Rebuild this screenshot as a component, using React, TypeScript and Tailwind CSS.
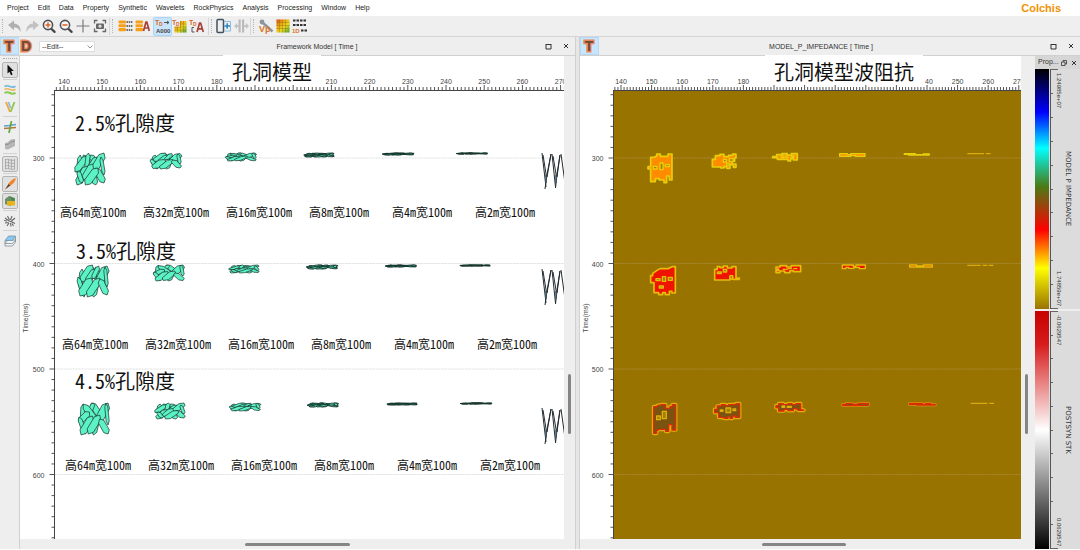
import React from 'react';

const menus = ['Project', 'Edit', 'Data', 'Property', 'Synthetic', 'Wavelets', 'RockPhysics', 'Analysis', 'Processing', 'Window', 'Help'];

const SANS = "font-['Liberation_Sans',sans-serif]";
const HEI = "font-['Noto_Sans_CJK_SC',sans-serif] [font-feature-settings:'hwid']";

/* ---------- toolbar ---------- */

function ToolButton({ label, active, children }: { label: string; active?: boolean; children: React.ReactNode }) {
  return (
    <button
      aria-label={label}
      className={`flex h-[17px] w-[17px] shrink-0 items-center justify-center rounded-[1px] ${active ? 'bg-[#c9e5fc] outline outline-[#a9d5f8]' : ''}`}
    >
      <svg width="16" height="16" viewBox="0 0 16 16" fill="none" className={SANS}>
        {children}
      </svg>
    </button>
  );
}

function ToolGroup({ children }: { children: React.ReactNode }) {
  return (
    <div className="flex items-center border-r border-[#d6d6d6] pr-px">
      <div className="mr-[3px] ml-[2px] h-[14px] border-l border-dotted border-[#b5b5b5]" />
      {children}
    </div>
  );
}

function Magnifier({ plus }: { plus?: boolean }) {
  return (
    <>
      <path d="M10 10.500l3.600 3.400" stroke="#444" strokeWidth="2.200" strokeLinecap="round" />
      <circle cx="7" cy="7" r="4.600" fill="#f5f5f5" stroke="#505458" strokeWidth="1.600" />
      <path d={plus ? 'M4.500 7h5M7 4.500v5' : 'M4.500 7h5'} stroke="#e0642c" strokeWidth="1.600" />
    </>
  );
}

function Stack() {
  return (
    <g fill="#f6a01a">
      <rect x="1.500" y="2.500" width="7.500" height="3" rx="1" />
      <rect x="1.500" y="6.200" width="7.500" height="3" rx="1" />
      <rect x="1.500" y="9.900" width="7.500" height="3.400" rx="1" />
    </g>
  );
}

function TimeDepth() {
  return (
    <g fontWeight="bold" fill="#d8662a">
      <text x="0" y="7" fontSize="7">T</text>
      <text x="4" y="8" fontSize="5">D</text>
    </g>
  );
}

function HeatSquare({ x, y, w, h }: { x: number; y: number; w: number; h: number }) {
  return (
    <>
      <defs>
        <linearGradient id="heat" x1="0" y1="0" x2="1" y2="1">
          <stop offset="0" stopColor="#e03c10" />
          <stop offset=".3" stopColor="#f0a010" />
          <stop offset=".6" stopColor="#e8d820" />
          <stop offset="1" stopColor="#48a030" />
        </linearGradient>
      </defs>
      <rect x={x} y={y} width={w} height={h} fill="url(#heat)" />
      <path d={`M${x + 3} ${y}v${h}M${x + 6} ${y}v${h}M${x + 9} ${y}v${h}M${x} ${y + 3}h${w}M${x} ${y + 6}h${w}M${x} ${y + 9}h${w}`} stroke="#8a6a10" strokeWidth=".4" />
    </>
  );
}

function Toolbar() {
  return (
    <div className="flex h-[21px] shrink-0 items-center border-b border-[#d4d4d4] bg-[#efefef]">
      <ToolGroup>
        <ToolButton label="Undo">
          <path d="M1 7l6-4.500v3c5 .5 7 4 6.500 8.500C12 11 10.500 9.500 7 9.300v3z" fill="#b0b0b0" />
        </ToolButton>
        <ToolButton label="Redo">
          <path d="M15 7L9 2.500v3C4 6 2 9.500 2.500 14 4 11 5.500 9.500 9 9.300v3z" fill="#c2c2c2" />
        </ToolButton>
        <ToolButton label="Zoom in"><Magnifier plus /></ToolButton>
        <ToolButton label="Zoom out"><Magnifier /></ToolButton>
        <ToolButton label="Pan"><path d="M8 1.500v13M1.500 8h13" stroke="#7a7a7a" strokeWidth="1.200" /></ToolButton>
        <ToolButton label="Capture">
          <path d="M2.500 5.500v-3h3M10.500 2.500h3v3M13.500 10.500v3h-3M5.500 13.500h-3v-3" stroke="#666" strokeWidth="1.300" />
          <rect x="4" y="5.500" width="8" height="5.500" rx="1" fill="#666" />
          <circle cx="8" cy="8.200" r="1.600" fill="#ddd" />
        </ToolButton>
      </ToolGroup>
      <ToolGroup>
        <ToolButton label="Layers">
          <Stack />
          <path d="M9.500 4h6M9.500 8h6M9.500 12h6" stroke="#444" strokeWidth="1.500" strokeDasharray="1.500 .7" />
        </ToolButton>
        <ToolButton label="Layer attributes">
          <Stack />
          <path d="M9.500 13l2.500-9h.8l2.500 9M10.500 10h4" stroke="#a84038" strokeWidth="1.700" />
        </ToolButton>
        <div className="w-[4px]" />
        <ToolButton label="Time depth" active>
          <TimeDepth />
          <path d="M9 4.500h5M12 3l2 1.500L12 6" stroke="#555" strokeWidth="1" />
          <text x="1" y="14.500" fontSize="6" fontWeight="bold" fill="#444">A000</text>
        </ToolButton>
        <ToolButton label="Time depth section">
          <HeatSquare x={2.500} y={3} w={12} h={11.500} />
          <rect x="0" y="1" width="8" height="7.500" fill="#efefef" />
          <TimeDepth />
        </ToolButton>
        <ToolButton label="Time depth attributes">
          <TimeDepth />
          <path d="M5 9.500H3V14h2.500" stroke="#555" strokeWidth="1" />
          <path d="M8 14l2.600-9h1l2.700 9M9 10.800h4" stroke="#a84038" strokeWidth="1.700" />
        </ToolButton>
        <div className="w-[2px]" />
      </ToolGroup>
      <ToolGroup>
        <ToolButton label="Add panel">
          <rect x="1" y="1.500" width="6.500" height="13" rx="1" stroke="#45525c" strokeWidth="1.500" />
          <path d="M8 3.500h6.500v9.500H8" stroke="#8abce0" strokeWidth="1" />
          <path d="M8.500 8h5.500M11.200 5.200v5.600" stroke="#2486cc" strokeWidth="1.500" />
        </ToolButton>
        <ToolButton label="Split panel">
          <rect x="5.500" y="1.500" width="2.200" height="13" fill="#bbb" />
          <rect x="9" y="1.500" width="2.200" height="13" fill="#bbb" />
          <path d="M1 8l3-3v2h2v2H4v2zM16 8l-3-3v2h-2v2h2v2z" fill="#c3c3c3" />
        </ToolButton>
      </ToolGroup>
      <div className="mr-[3px] ml-[2px] h-[14px] border-l border-dotted border-[#b5b5b5]" />
      <ToolButton label="Velocity tool">
        <path d="M3 3.500l5 4 6.500 6" stroke="#8c959c" strokeWidth="2.400" />
        <circle cx="4" cy="4" r="2.400" fill="#8c959c" />
        <text x="1" y="14" fontSize="9" fontWeight="bold" fill="#d8762a">Vp</text>
      </ToolButton>
      <ToolButton label="Section"><HeatSquare x={1.500} y={1.500} w={13} h={13} /></ToolButton>
      <ToolButton label="1D model">
        <path d="M1 2.500h14M1 7h14M9 12.500h6" stroke="#333" strokeWidth="1.800" strokeDasharray="2.500 1" />
        <text x="0" y="14.500" fontSize="6" fontWeight="bold" fill="#d8762a">1D</text>
      </ToolButton>
    </div>
  );
}

/* ---------- side strip ---------- */

function SideButton({ label, boxed, children }: { label: string; boxed?: boolean; children: React.ReactNode }) {
  return (
    <button
      aria-label={label}
      className={`flex h-[14px] w-[14px] items-center justify-center rounded-[1px] ${boxed ? 'bg-[#e0e0e0] outline outline-[#b4b4b4]' : ''}`}
    >
      <svg width="12" height="12" viewBox="0 0 12 12" fill="none">{children}</svg>
    </button>
  );
}

const sideGroup = 'mt-[2px] flex flex-col gap-[3px] border-t border-[#d2d2d2] pt-[3px]';

function SideStrip() {
  return (
    <div className="flex w-[20px] shrink-0 flex-col items-center border-r border-[#d0d0d0] bg-[#eee]">
      <div className="mt-[2px] mb-[4px] w-[14px] border-t border-dotted border-[#aaa]" />
      <SideButton label="Select" boxed>
        <path d="M3.500.5v9l2-1.800 1.500 3.500 1.600-.7L7.200 7h2.600z" fill="#111" />
      </SideButton>
      <div className={sideGroup}>
        <SideButton label="Horizons">
          <path d="M.5 2.500q2.500-1.500 5.500 0t5.500-.2" stroke="#6fb6e0" strokeWidth="1.700" />
          <path d="M.5 5.500q2.500-1.500 5.500 0t5.500-.2" stroke="#f0b860" strokeWidth="1.700" />
          <path d="M.5 9q2.500-1.500 5.500 0t5.500-.2" stroke="#86cc50" strokeWidth="2" />
        </SideButton>
        <SideButton label="Faults">
          <path d="M2 1l4 10" stroke="#f0a848" strokeWidth="2" />
          <path d="M4.500 1l2 6" stroke="#80b8e0" strokeWidth="1.500" />
          <path d="M10.500 1L6.500 11" stroke="#94c850" strokeWidth="2" />
        </SideButton>
      </div>
      <div className={sideGroup}>
        <SideButton label="Intersection">
          <path d="M0 5l5-.5 7-1" stroke="#5ba0d0" strokeWidth="1.500" />
          <path d="M0 7.500l12-1" stroke="#b07840" strokeWidth="1.700" />
          <path d="M7.500 0L5 12" stroke="#66a838" strokeWidth="1.700" />
        </SideButton>
        <SideButton label="Body">
          <path d="M1 5q3 0 4-2t6-2v7q-3 1-5 2.500T1 11z" fill="#b6b6b6" />
          <path d="M1 6.500q4 0 5-1.500t5-2" stroke="#8e8e8e" />
        </SideButton>
      </div>
      <div className={sideGroup}>
        <SideButton label="Grid" boxed>
          <path d="M1 2q2.500-1 5 0t5 0M1 5q2.500-1 5 0t5 0M1 8q2.500-1 5 0t5 0M1 11q2.500-1 5 0t5 0M1.500 1v10M4.500 1v10M7.500 1v10M10.500 1v10" stroke="#a2a2a2" strokeWidth=".8" />
        </SideButton>
      </div>
      <div className={sideGroup}>
        <SideButton label="Brush" boxed>
          <path d="M11.500.5Q8 1 4.500 6l1.800 1.600Q11 4.500 11.500.5z" fill="#ef8428" stroke="#ef8428" strokeWidth=".6" />
          <path d="M4.500 6L1 11.500 6.300 7.600z" fill="#5a3a24" />
        </SideButton>
        <SideButton label="Fill" boxed>
          <path d="M1 4l4-3 6 2v5l-5 3-5-2z" fill="#6c8f6a" />
          <path d="M3 6h8v4.500H3z" fill="#e8b41c" />
          <path d="M6 1l5 4-3 1z" fill="#3c8c3c" />
        </SideButton>
      </div>
      <div className={sideGroup}>
        <SideButton label="Scatter">
          <path d="M1 3l4 3M3.500 1l2 4M8 1L6.500 5M11 3L7.500 6M1 8l3.500-.5M11 8.500L8 7M3 11l2-3M7 11.500L6.500 8M9.500 11L8 8.500M0 5.500l3 .5M5 6l3 1" stroke="#666" strokeWidth="1.100" />
        </SideButton>
      </div>
      <div className={sideGroup}>
        <SideButton label="Slices">
          <path d="M1 8.500L4 5h7.500v2L8.500 11H1z" fill="#f4f4f4" stroke="#7c8a94" strokeWidth=".8" />
          <path d="M1 5.500L4.500 1H11.500L8.500 5.500z" fill="#8cc8ec" stroke="#6898b8" strokeWidth=".8" />
          <path d="M1 5.500v3h7.500l3-3.500V1.500" stroke="#7c8a94" strokeWidth=".8" />
        </SideButton>
      </div>
    </div>
  );
}

/* ---------- pane header ---------- */

function LetterButton({ letter, active }: { letter: string; active?: boolean }) {
  return (
    <button
      aria-label={letter === 'T' ? 'Time domain' : 'Depth domain'}
      className={`flex h-[16px] w-[17px] items-center justify-center ${active ? 'bg-[#c9e5fc] outline outline-[#b4daf8]' : ''}`}
    >
      <svg width="17" height="16" className={SANS}>
        <text x="8" y="13" textAnchor="middle" fontSize="14" fontWeight="bold" fill="#6e4838" stroke="#e8875a" strokeWidth="3" paintOrder="stroke">{letter}</text>
      </svg>
    </button>
  );
}

function PaneHeader({ title, children }: { title: string; children: React.ReactNode }) {
  return (
    <header className="flex h-[19px] shrink-0 items-center border-b border-[#d0d0d0] bg-[#eee] pl-px">
      {children}
      <h2 className="flex-1 text-center text-[7px] leading-none text-[#333]">{title}</h2>
      <button aria-label="Maximize" className="flex h-[12px] w-[18px] items-center justify-center">
        <svg width="7" height="7" fill="none"><path d="M1 1.500h5M1 1v5h5V1" stroke="#333" /></svg>
      </button>
      <button aria-label="Close" className="flex h-[12px] w-[18px] items-center justify-center">
        <svg width="6" height="6" fill="none"><path d="M1 1l4 4M5 1L1 5" stroke="#333" /></svg>
      </button>
    </header>
  );
}

/* ---------- axes ---------- */

type AxisProps = { x0: number; origin: number; step: number; grid: string; labels: number[] };

const traces = Array.from({ length: 134 }, (_, i) => 138 + i);
const times = Array.from({ length: 43 }, (_, i) => 240 + i * 10);

// x0: axis position, origin: x of trace 140, step: pixels per trace
function Axes({ x0, origin, step, grid, labels }: AxisProps) {
  const tx = (v: number) => origin + (v - 140) * step;
  const ty = (v: number) => 102 + (v - 300) * 1.055;
  return (
    <g className="text-[7px]" fill="#444">
      {times.filter(v => v % 100 === 0).map(v => (
        <g key={v}>
          <line x1={x0} x2="100%" y1={ty(v)} y2={ty(v)} stroke={grid} strokeWidth=".8" strokeDasharray="2 1" />
          <text x={x0 - 10} y={ty(v) + 3} textAnchor="end">{v}</text>
        </g>
      ))}
      {times.map(v => (
        <line key={v} x1={x0 - (v % 100 ? 3 : 5)} x2={x0} y1={ty(v)} y2={ty(v)} stroke="#555" />
      ))}
      {traces.map(v => (
        <line key={v} x1={tx(v)} x2={tx(v)} y1={v % 10 ? 31 : 29} y2={34} stroke="#555" />
      ))}
      {labels.map(v => (
        <text key={v} x={tx(v)} y="28" textAnchor="middle">{v}</text>
      ))}
      <line x1={x0} x2={x0} y1="34" y2="100%" stroke="#444" />
      <line x1={x0} x2="100%" y1="34.5" y2="34.5" stroke="#444" />
      <text transform="translate(8 262) rotate(-90)" textAnchor="middle">Time(ms)</text>
    </g>
  );
}

/* ---------- framework model ---------- */

// fractures inside a 28x32 body: x1, y1, x2, y2, thickness
const bodies = [
  [
    [3, 22, 5, 2, 4], [8, 2, 16, 16, 5], [15, 2, 21, 12, 5], [0, 19, 12, 3, 6], [11, 17, 13, 0, 4], [13, 17, 21, 4, 5],
    [17, 19, 28, 0, 7], [2, 32, 12, 13, 7], [8, 27, 17, 11, 6], [3, 18, 7, 30, 4], [20, 15, 28, 30, 6], [17, 19, 20, 32, 5],
    [10, 32, 22, 15, 7], [25, 4, 28, 22, 3],
  ],
  [
    [2, 24, 4, 4, 4], [11, 1, 18, 14, 5], [17, 2, 21, 14, 4], [3, 17, 14, 0, 7], [8, 18, 17, 4, 6], [14, 14, 20, 1, 4],
    [19, 20, 28, 1, 8], [0, 12, 6, 32, 4], [2, 31, 13, 13, 8], [15, 32, 18, 16, 5], [9, 32, 21, 13, 7], [21, 14, 28, 30, 6],
    [26, 2, 28, 22, 3],
  ],
  [
    [3, 20, 4, 1, 4], [12, 0, 21, 14, 6], [10, 10, 14, 0, 4], [4, 1, 18, 20, 6], [17, 21, 28, 0, 8], [0, 19, 10, 9, 6],
    [0, 14, 6, 31, 4], [2, 32, 13, 13, 7], [14, 32, 18, 14, 5], [9, 31, 20, 12, 7], [20, 16, 28, 31, 6], [26, 0, 28, 22, 3],
  ],
];

function FractureBody({ x, y, w, h, kind }: { x: number; y: number; w: number; h: number; kind: number }) {
  const sx = w / 28;
  const sy = h / 32;
  const pt = (px: number, py: number) => `${(px * sx).toFixed(1)} ${(py * sy).toFixed(1)}`;
  return (
    <g transform={`translate(${x} ${y})`} fill="#5cf2c6" stroke="#14322a" strokeWidth={h < 6 ? 0.9 : 0.7} strokeLinejoin="round">
      {bodies[kind].map(([x1, y1, x2, y2, t], i) => {
        const len = Math.hypot(x2 - x1, y2 - y1);
        const nx = (-(y2 - y1) / len) * t * 0.5;
        const ny = ((x2 - x1) / len) * t * 0.5;
        const ax = x1 + (x2 - x1) * 0.18;
        const ay = y1 + (y2 - y1) * 0.18;
        const bx = x1 + (x2 - x1) * 0.82;
        const by = y1 + (y2 - y1) * 0.82;
        return (
          <path
            key={i}
            d={`M${pt(x1, y1)}L${pt(ax + nx, ay + ny)}L${pt(bx + nx, by + ny)}L${pt(x2, y2)}L${pt(bx - nx, by - ny)}L${pt(ax - nx, ay - ny)}Z`}
          />
        );
      })}
    </g>
  );
}

const heights = [32, 16, 8, 4, 2, 1];
const names = ['64', '32', '16', '8', '4', '2'];

const modelRows = [
  { title: '2.5%孔隙度', tx: 55, ty: 75, bodyX: 55, bodyY: 97, labelX: 40, labelY: 161, endY: 97 },
  { title: '3.5%孔隙度', tx: 56, ty: 203, bodyX: 58, bodyY: 209, labelX: 42, labelY: 293, endY: 213 },
  { title: '4.5%孔隙度', tx: 55, ty: 333, bodyX: 59, bodyY: 347, labelX: 45, labelY: 414, endY: 352 },
];

const bodyOffsets = [0, 76, 151, 229, 308, 382];

function FrameworkPlot() {
  return (
    <svg className={`h-full w-full overflow-hidden ${SANS}`}>
      <Axes x0={34.5} origin={44} step={3.82} grid="#d4d4d4" labels={[140, 150, 160, 170, 180, 210, 220, 230, 240, 250, 260, 270]} />
      {modelRows.map((row, r) => (
        <g key={row.title}>
          <text x={row.tx} y={row.ty} className={`text-[20px] ${HEI}`} fill="#111">{row.title}</text>
          {names.map((n, i) => (
            <g key={n}>
              <FractureBody x={row.bodyX + bodyOffsets[i]} y={row.bodyY} w={29} h={heights[i]} kind={(r + i) % 3} />
              <text x={row.labelX + i * 83} y={row.labelY} className={`text-[12px] ${HEI}`} fill="#111">{`高${n}m宽100m`}</text>
            </g>
          ))}
          <g transform={`translate(521 ${row.endY})`} fill="none">
            <path d="M1 0L5 34M2 2L5.500 24L10 1M4 36L6 22M14.500 35L16 22M11 1L14.500 34M12 3L15.500 24L19 2M20 1L24 30M10 1L6 24M19 2L16 24" stroke="#222b30" strokeWidth="1" />
            <path d="M5 22V30M15 22V30" stroke="#3c5666" strokeWidth="1.500" />
          </g>
        </g>
      ))}
    </svg>
  );
}

/* ---------- impedance model ---------- */

type Blob = { d: string; holes?: string };

// outlines are digitised at three units per pixel
const orange: Blob[] = [
  { d: 'M212 82H222L230 78V72H241V79H264V72H276V150H268V138H260V158H252V150H238V146H226V155H212V117H204V110H212Z', holes: 'M220 109h11v8h-11zM240 99h9v20h-9zM256 104h12v6h-12z' },
  { d: 'M397 88H406V77H420V73H432V80H446V76H458V72H468V84H464V94H456V102H468V112H460V104H450V115H440V110H432V114H422V111H397Z', holes: 'M430 88h9v8h-9zM448 86h12v8h-12zM440 100h8v6h-8z' },
  { d: 'M578 80H590V74H606V71H622V75H634V71H652V90H640V86H632V93H624V88H592V83H578Z', holes: 'M604 78h8v5h-8zM618 77h6v6h-6zM634 78h8v4h-8z' },
  { d: 'M779 71H802V74H812V71H855V79H826V77H812V79H779Z' },
  { d: 'M973 71H1006V74H1030V72H1048V75H985V73H973Z' },
  { d: 'M1162 71H1212M1218 71H1232' },
];

const red: Blob[] = [
  { d: 'M212 437H218V430L230 422L240 416H264L276 410H286V489H276V484H268V494H256V488H248V494H236V488H222V458H212Z', holes: 'M228 446h12v6h-12zM247 440h10v14h-10zM265 442h12v9h-12zM238 468h12v6h-12z' },
  { d: 'M404 418H412V410H420V413H430V408H442V414H456V410H468V444H478V448H458V440H450V450H404Z', holes: 'M430 418h10v8h-10zM412 426h12v5h-12zM450 437h8v10h-8z' },
  { d: 'M588 411H600V407H620V411H634V407H662V425H640V422H630V428H614V423H600V428H588V421H596V417H588Z', holes: 'M608 418h12l8-3h8M640 416h12' },
  { d: 'M787 405H820V409H828V405H856V416H838V412H822V415H806V412H798V416H787Z' },
  { d: 'M989 405H1010V408H1030V405H1057V411H989Z' },
  { d: 'M1162 406H1202M1208 406H1222M1226 406H1240' },
];

const brown: Blob[] = [
  { d: 'M221 140H232V137L246 134H257V145H270V140H277V134H287V210H276V194H266V214H257V208H238L230 212V220H221Z', holes: 'M230 168h11v11h-11zM247 154h12v22h-12z' },
  { d: 'M404 148H412V138H424V134H436V137H446V134H468V131H479V172H466V168H458V175H450V170H444V175H432V172H416V158H404Z', holes: 'M438 144h14v14h-14zM421 150h8v4h-8zM459 147h8v5h-8z' },
  { d: 'M588 137H596V131H610V134H624V131H636V134H648V131H662V148L672 151H656L648 146H640V152H624V148H612V153H596V143H588Z', holes: 'M606 138h8v4h-8zM622 139h12v3h-12z' },
  { d: 'M788 133H798V130H818V133H834V130H865V136H846V137H788Z' },
  { d: 'M988 130H1028V133H1038V130H1052V133H1066V135H1010V133H988Z' },
  { d: 'M1172 130H1222M1228 130H1242' },
];

function BlobRow({ blobs, dy, fill, line, halo }: { blobs: Blob[]; dy: number; fill: string; line: string; halo?: string }) {
  return (
    <g transform={`translate(0 ${dy}) scale(.3333)`} strokeLinejoin="round">
      {blobs.map(({ d, holes }, i) => {
        const thin = i === 5;
        return (
          <g key={i}>
            {halo && !thin && <path d={d} fill="none" stroke={halo} strokeWidth={i > 2 ? 7 : 11} />}
            <path d={d} fill={thin ? 'none' : fill} stroke={thin ? '#d8ac10' : line} strokeWidth={halo || i > 2 ? 4 : 5} />
            {holes && <path d={holes} fill="#a08000" stroke={halo ?? line} strokeWidth="4" />}
          </g>
        );
      })}
    </g>
  );
}

function ImpedancePlot() {
  return (
    <svg className={`h-full w-full overflow-hidden ${SANS}`}>
      <svg x="33" y="34" width="100%" height="100%">
        <rect width="100%" height="100%" fill="#997300" />
      </svg>
      <Axes x0={33.5} origin={41} step={3.06} grid="#a88f45" labels={[140, 150, 160, 170, 180, 250, 260, 270]} />
      <text x="347" y="28" fill="#444" className="text-[7px]" textAnchor="middle" dx="2">40</text>
      <BlobRow blobs={orange} dy={74} fill="#ff8c00" line="#e6cf0a" />
      <BlobRow blobs={red} dy={74} fill="#ee1400" line="#e4bd0a" />
      <BlobRow blobs={brown} dy={304} fill="#7b5310" line="#dd2a08" halo="#dfae08" />
    </svg>
  );
}

function Plot({ heading, headingClass, thumbClass, gutterClass, children }: {
  heading: string;
  headingClass: string;
  thumbClass: string;
  gutterClass: string;
  children: React.ReactNode;
}) {
  return (
    <div className="flex min-w-0 flex-1 flex-col">
      <div className="flex min-h-0 flex-1">
        <div className="relative min-w-0 flex-1 bg-white">
          {children}
          <h1 className={`absolute -top-px h-[29px] bg-white text-center text-[20px] leading-[34px] whitespace-nowrap text-[#111] ${HEI} ${headingClass}`}>{heading}</h1>
        </div>
        <div className={`flex shrink-0 flex-col bg-[#eee] ${gutterClass}`}>
          <div className="mt-auto mb-[105px] ml-[4px] h-[60px] w-[3px] rounded-full bg-[#858585]" />
        </div>
      </div>
      <div className="flex h-[10px] shrink-0 items-center bg-[#eee]">
        <div className={`h-[3px] rounded-full bg-[#858585] ${thumbClass}`} />
      </div>
    </div>
  );
}

/* ---------- colour bars ---------- */

function ColorScale({ name, min, max, gradient }: { name: string; min: string; max: string; gradient: string }) {
  return (
    <div className="flex min-h-0 flex-1 bg-[#dcdcdc]">
      <div className={`w-[14px] ${gradient}`} />
      <div className="ml-px flex w-[3px] flex-col border-l border-[#555]">
        {Array.from({ length: 10 }, (_, i) => (
          <div key={i} className={`flex-1 border-t border-[#666] ${i === 0 ? 'w-[7px]' : 'w-[2px]'}`} />
        ))}
        <div className="w-[7px] border-t border-[#666]" />
      </div>
      <div className="ml-px flex w-[9px] flex-col items-center justify-between pt-[4px] pb-[3px] text-[6px] leading-[9px] text-[#333]">
        <span className="[writing-mode:vertical-rl]">{min}</span>
        <span className="[writing-mode:vertical-rl]">{max}</span>
      </div>
      <div className="flex w-[10px] flex-col items-center justify-center font-['DejaVu_Sans',sans-serif] text-[7px] leading-[10px] whitespace-nowrap text-[#333]">
        <span className="[writing-mode:vertical-rl]">{name}</span>
      </div>
    </div>
  );
}

function PropertyDock() {
  return (
    <aside className="flex w-[45px] shrink-0 flex-col gap-[2px] bg-[#eee]">
      <div className="flex min-h-0 flex-1 flex-col">
        <div className="flex h-[13px] shrink-0 items-center justify-between bg-[#d6d6d6] px-[3px] text-[7px] text-[#333]">
          <span>Prop...</span>
          <button aria-label="Float" className="ml-px">
            <svg width="6" height="6" fill="none"><path d="M2 2V.5h3.500V4H4M.5 2H4v3.500H.5z" stroke="#333" strokeWidth=".8" /></svg>
          </button>
          <button aria-label="Close dock" className="ml-[3px]">
            <svg width="6" height="6" fill="none"><path d="M1 1l4 4M5 1L1 5" stroke="#333" /></svg>
          </button>
        </div>
        <ColorScale
          name="MODEL P IMPEDANCE"
          min="1.24985e+07"
          max="1.74859e+07"
          gradient="bg-[linear-gradient(#000_0%,#00f_18%,#0ff_33%,#4a7a14_49%,#f00_67%,#ff0_83%,#997300_100%)]"
        />
      </div>
      <div className="flex h-[238px] shrink-0">
        <ColorScale
          name="POSTSYN STK"
          min="-0.0629547"
          max="0.0629547"
          gradient="bg-[linear-gradient(#c80000_0%,#d61c1c_14%,#fff_50%,#000_100%)]"
        />
      </div>
    </aside>
  );
}

export default function App() {
  return (
    <div className={`flex h-screen flex-col overflow-hidden border-b border-white bg-[#eee] ${SANS}`}>
      <nav className="flex h-[16px] shrink-0 items-center gap-px bg-white pl-[3px] text-[7px] text-[#222]">
        {menus.map(m => (
          <button key={m} className="px-[4px]">{m}</button>
        ))}
        <span className="mr-[19px] ml-auto text-[11px] font-black text-[#f39200]">Colchis</span>
      </nav>
      <Toolbar />

      <main className="flex min-h-0 flex-1">
        <section className="flex min-w-0 flex-[575] flex-col">
          <PaneHeader title="Framework Model [ Time ]">
            <LetterButton letter="T" active />
            <LetterButton letter="D" />
            <div className="relative ml-[4px]">
              <select aria-label="Edit mode" className="block h-[11px] w-[56px] appearance-none border border-[#ddd] bg-white pl-[2px] text-[7px] leading-none text-[#333]">
                <option>--Edit--</option>
              </select>
              <svg width="6" height="4" fill="none" className="pointer-events-none absolute top-[4px] right-[2px]"><path d="M.5.5L3 3 5.500.5" stroke="#777" strokeWidth=".8" /></svg>
            </div>
          </PaneHeader>
          <div className="flex min-h-0 flex-1">
            <SideStrip />
            <Plot heading="孔洞模型" headingClass="left-[203px] w-[98px]" thumbClass="ml-[225px] w-[105px]" gutterClass="w-[11px]">
              <FrameworkPlot />
            </Plot>
          </div>
        </section>

        <div className="w-[5px] shrink-0 border-x border-[#d0d0d0] bg-[#e6e6e6]" />

        <section className="flex min-w-0 flex-[500] flex-col">
          <PaneHeader title="MODEL_P_IMPEDANCE [ Time ]">
            <LetterButton letter="T" active />
          </PaneHeader>
          <div className="flex min-h-0 flex-1">
            <Plot heading="孔洞模型波阻抗" headingClass="left-[185px] w-[158px]" thumbClass="ml-[182px] w-[84px]" gutterClass="w-[14px]">
              <ImpedancePlot />
            </Plot>
            <PropertyDock />
          </div>
        </section>
      </main>
    </div>
  );
}
